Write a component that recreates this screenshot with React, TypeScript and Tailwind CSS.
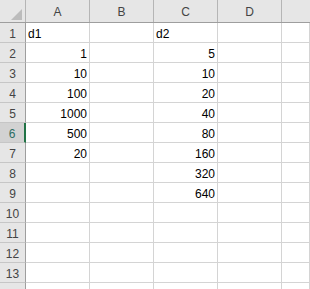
import React from "react";

const colA = ["d1", "1", "10", "100", "1000", "500", "20", "", "", "", "", "", "", ""];
const colC = ["d2", "5", "10", "20", "40", "80", "160", "320", "640", "", "", "", "", ""];
const SELECTED_ROW = 6;

function Cell({ value, last }: { value: string; last?: boolean }) {
  const isNum = value !== "" && !isNaN(Number(value));
  return (
    <div
      className={`flex items-end h-full pb-[1px] border-r border-[#d4d4d4] ${
        last ? "flex-1" : "w-[64px] shrink-0"
      } ${isNum ? "justify-end pr-[2px]" : "justify-start pl-[2px]"}`}
    >
      <span className="leading-[13px] text-black">{value}</span>
    </div>
  );
}

export default function App() {
  const rows = Array.from({ length: 14 }, (_, i) => i + 1);

  return (
    <div
      className="w-[310px] h-[289px] overflow-hidden bg-white text-[12px]"
      style={{ fontFamily: '"Liberation Sans", Arial, sans-serif' }}
    >
      {/* column headers */}
      <div className="flex h-[23px] bg-[#e6e6e6] border-b border-[#9e9e9e]">
        <div className="relative w-[26px] shrink-0 border-r border-[#b5b5b5]">
          <svg className="absolute right-[3px] bottom-[2px]" width="11" height="11" viewBox="0 0 11 11">
            <polygon points="11,0 11,11 0,11" fill="#bcbcbc" />
          </svg>
        </div>
        {["A", "B", "C", "D"].map((c) => (
          <div
            key={c}
            className="w-[64px] shrink-0 flex items-end justify-center pb-[3px] border-r border-[#b5b5b5] text-[#444]"
          >
            <span className="leading-[13px]">{c}</span>
          </div>
        ))}
        <div className="flex-1" />
      </div>

      {/* rows */}
      {rows.map((r) => {
        const sel = r === SELECTED_ROW;
        // last row is cut off by the window, its number is not visible
        const label = r < 14 ? r : "";
        return (
          <div key={r} className="flex h-[20px] border-b border-[#d4d4d4]">
            <div
              className={`w-[26px] shrink-0 flex items-end justify-center pb-[1px] -mb-[1px] h-[20px] border-b border-[#c6c6c6] ${
                sel
                  ? "bg-[#d2d2d2] text-[#2e6e63] border-r-2 border-r-[#217346]"
                  : "bg-[#e6e6e6] text-[#444] border-r border-r-[#9e9e9e]"
              }`}
            >
              <span className="leading-[13px]">{label}</span>
            </div>
            <Cell value={colA[r - 1]} />
            <Cell value="" />
            <Cell value={colC[r - 1]} />
            <Cell value="" />
            <Cell value="" last />
          </div>
        );
      })}
    </div>
  );
}
